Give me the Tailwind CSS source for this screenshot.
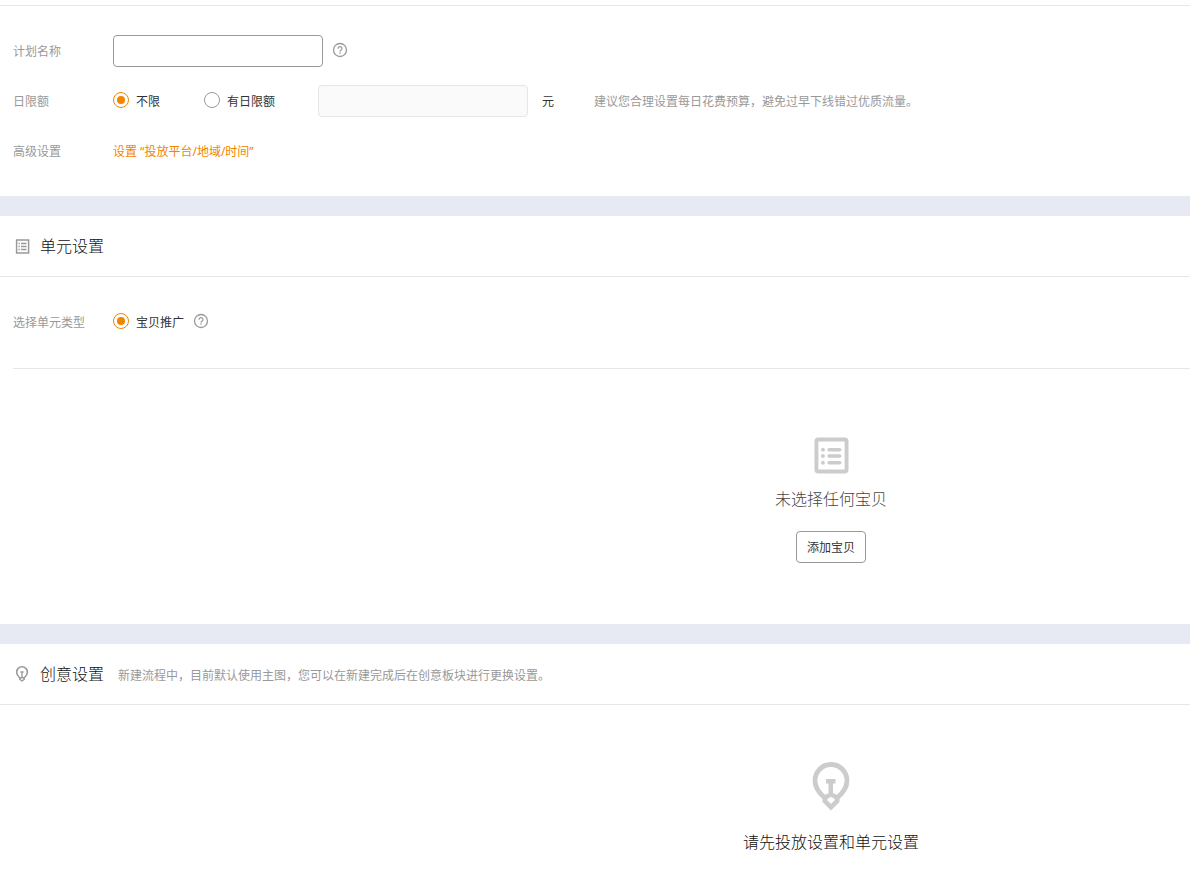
<!DOCTYPE html>
<html lang="zh-CN">
<head>
<meta charset="utf-8">
<meta name="viewport" content="width=device-width, initial-scale=1">
<title>新建推广计划</title>
<script src="https://cdn.jsdelivr.net/npm/@tailwindcss/browser@4"></script>
</head>
<body class="min-h-screen overflow-x-hidden bg-white font-['Noto_Sans','Noto_Sans_CJK_SC',sans-serif] text-xs text-[#333333]">
<svg class="hidden" aria-hidden="true">
  <symbol id="help" viewBox="0 0 16 16">
    <circle cx="8" cy="8" r="6.5" fill="none" stroke="currentColor" stroke-width="1.3"/>
    <path d="M6 6.700a2 2 0 1 1 3 1.600c-.7.4-1 .7-1 1.400" fill="none" stroke="currentColor" stroke-width="1.2"/>
    <rect x="7.35" y="10.5" width="1.3" height="1.3" fill="currentColor"/>
  </symbol>
  <symbol id="list" viewBox="0 0 36 38">
    <rect x="2.500" y="2.500" width="31" height="33" rx="2" fill="none" stroke="currentColor" stroke-width="4"/>
    <path d="M15.500 13h11M15.500 19.500h11M15.500 26.500h11" fill="none" stroke="currentColor" stroke-width="3.600" stroke-linecap="round"/>
    <circle cx="9.200" cy="13" r="2" fill="currentColor"/><circle cx="9.200" cy="19.500" r="2" fill="currentColor"/><circle cx="9.200" cy="26.500" r="2" fill="currentColor"/>
  </symbol>
  <symbol id="bulb" viewBox="0 0 38 50">
    <path d="M12.500 36.500C6.500 31.500 3 26.500 3 19.500a16 16 0 0 1 32 0C35 26.500 31.500 31.500 25.500 36.500" fill="none" stroke="currentColor" stroke-width="4.800"/>
    <path d="M14 18h9.500v4.500h-2.500v12h-4.500v-12H14z" fill="currentColor"/>
    <path fill-rule="evenodd" d="M10.500 35 16 32.500h6l5.500 2.500v6L19 49.500 10.500 41zM15 39l4 4 4-4-1.500-2-2.500-1-2.500 1z" fill="currentColor"/>
  </symbol>
</svg>

<main>
  <section class="mt-[5px] border-t border-[#e6e6e6] pt-[29px] pb-[29px] pl-[13px]">
    <div class="flex h-8 items-center">
      <label for="plan" class="w-[100px] shrink-0 pt-0.5 text-[#999999]">计划名称</label>
      <input id="plan" type="text" class="h-8 w-[210px] rounded border border-[#999999] bg-white px-2 outline-none">
      <button type="button" aria-label="计划名称说明" class="mb-0.5 ml-[9px] text-[#999999]"><svg class="size-4"><use href="#help"/></svg></button>
    </div>
    <div class="mt-[18px] flex h-8 items-center">
      <span class="w-[100px] shrink-0 pt-0.5 text-[#999999]">日限额</span>
      <label class="flex w-[91px] shrink-0 items-center gap-[7px]">
        <input type="radio" name="limit" checked class="mb-0.5 size-4 shrink-0 appearance-none rounded-full border border-[#999999] p-[3px] checked:border-[#f28500] checked:bg-[#f28500] checked:bg-clip-content">
        <span class="pt-0.5">不限</span>
      </label>
      <label class="flex w-[114px] shrink-0 items-center gap-[7px]">
        <input type="radio" name="limit" class="mb-0.5 size-4 shrink-0 appearance-none rounded-full border border-[#999999] p-[3px] checked:border-[#f28500] checked:bg-[#f28500] checked:bg-clip-content">
        <span class="pt-0.5">有日限额</span>
      </label>
      <input type="text" disabled aria-label="日限额金额（元）" class="h-8 w-[210px] rounded border border-[#e6e6e6] bg-[#fafafa] px-2">
      <span class="ml-[14px] pt-0.5">元</span>
      <span class="ml-10 whitespace-nowrap pt-0.5 text-[#999999]">建议您合理设置每日花费预算，避免过早下线错过优质流量。</span>
    </div>
    <div class="mt-[18px] flex h-8 items-center">
      <span class="w-[100px] shrink-0 pt-0.5 text-[#999999]">高级设置</span>
      <a href="#" class="pt-0.5 text-[#f28500]">设置 “投放平台/地域/时间”</a>
    </div>
  </section>

  <div class="h-5 bg-[#e7eaf3]"></div>

  <section>
    <header class="flex h-[61px] items-center border-b border-[#e6e6e6] pl-[15px]">
      <svg class="h-[15px] w-[15px] text-[#999999]" viewBox="0 0 15 15" aria-hidden="true">
        <rect x="1.600" y="1" width="12" height="13" fill="none" stroke="currentColor" stroke-width="1.500"/>
        <path d="M6 4.500h5.500M6 7.500h5.500M6 10.500h5.500M3.500 4.500h1.300M3.500 7.500h1.300M3.500 10.500h1.300" stroke="currentColor" stroke-width="1.300"/>
      </svg>
      <h2 class="ml-[10px] text-base font-light text-[#111111]">单元设置</h2>
    </header>
    <div class="ml-[13px] flex h-[92px] items-center border-b border-[#e6e6e6] pb-0.5">
      <span class="w-[100px] shrink-0 pt-0.5 text-[#999999]">选择单元类型</span>
      <label class="flex items-center gap-[7px]">
        <input type="radio" name="unit" checked class="mb-0.5 size-4 shrink-0 appearance-none rounded-full border border-[#999999] p-[3px] checked:border-[#f28500] checked:bg-[#f28500] checked:bg-clip-content">
        <span class="pt-0.5">宝贝推广</span>
      </label>
      <button type="button" aria-label="宝贝推广说明" class="mb-0.5 ml-[9px] text-[#999999]"><svg class="size-4"><use href="#help"/></svg></button>
    </div>
    <div class="flex flex-col items-center pt-[68px] pb-[61px] pl-[472px]">
      <svg class="h-[37px] w-[35px] text-[#cccccc]" aria-hidden="true"><use href="#list"/></svg>
      <p class="mt-[13px] text-base font-light text-[#444444]">未选择任何宝贝</p>
      <button type="button" class="mt-5 h-8 w-[70px] rounded border border-[#999999] bg-white pt-0.5">添加宝贝</button>
    </div>
  </section>

  <div class="h-5 bg-[#e7eaf3]"></div>

  <section>
    <header class="flex h-[61px] items-center border-b border-[#e6e6e6] pl-[15px]">
      <svg class="h-4 w-[15px] text-[#999999]" viewBox="0 0 15 16" aria-hidden="true">
        <path d="M5 12C3.500 10.500 1.600 8.800 1.600 6.200a5.400 5.400 0 0 1 10.800 0C12.400 8.800 10.500 10.500 9 12" fill="none" stroke="currentColor" stroke-width="1.600"/>
        <path d="M5.500 6h3M7 6v5.500" stroke="currentColor" stroke-width="1.300"/>
        <path d="M5.200 11.800h3.600l.5 1.500L7 15l-2.300-1.700z" fill="none" stroke="currentColor" stroke-width="1.400"/>
      </svg>
      <h2 class="ml-[10px] text-base font-light text-[#111111]">创意设置</h2>
      <span class="ml-[14px] pt-1 text-[#999999]">新建流程中，目前默认使用主图，您可以在新建完成后在创意板块进行更换设置。</span>
    </header>
    <div class="flex flex-col items-center pt-14 pb-5 pl-[472px]">
      <svg class="h-[50px] w-[38px] text-[#cccccc]" aria-hidden="true"><use href="#bulb"/></svg>
      <p class="mt-[19px] text-base font-light text-[#111111]">请先投放设置和单元设置</p>
    </div>
  </section>
</main>
</body>
</html>
